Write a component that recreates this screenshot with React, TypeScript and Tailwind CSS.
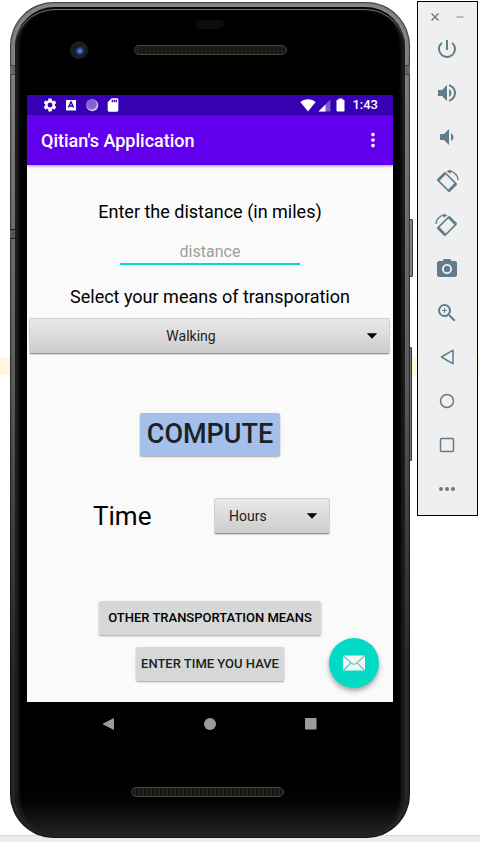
import type { ReactNode } from 'react';
import {
  MdCameraAlt,
  MdMoreVert,
  MdPowerSettingsNew,
  MdSdCard,
  MdSettings,
  MdVolumeDown,
  MdVolumeUp,
  MdZoomIn,
} from 'react-icons/md';

function RotateIcon({ mirrored = false }: { mirrored?: boolean }) {
  return (
    <svg viewBox="0 0 24 24" className="size-6" fill="currentColor" aria-hidden="true">
      <g transform={mirrored ? 'translate(24 0) scale(-1 1)' : undefined}>
        <path
          transform="translate(12 13) rotate(45)"
          fillRule="evenodd"
          d="M-7.500-6h15a1.500 1.500 0 0 1 1.500 1.500v9a1.500 1.500 0 0 1-1.500 1.500h-15a1.500 1.500 0 0 1-1.500-1.500v-9a1.500 1.500 0 0 1 1.500-1.500zM-6.200-4.300v8.600h12.400v-8.600z"
        />
        <path d="M13 2.200C18.500 1.800 22.800 5.500 23 11" fill="none" stroke="currentColor" strokeWidth="1.300" />
        <path d="M11.500 2.200l4.500-1.400-.6 4z" />
      </g>
    </svg>
  );
}

function ToolButton({ label, children }: { label: string; children: ReactNode }) {
  return (
    <button type="button" aria-label={label} className="flex h-11 w-full items-center justify-center pr-0.5">
      {children}
    </button>
  );
}

function EmulatorToolbar() {
  return (
    <aside className="mt-px w-[61px] shrink-0 border border-black bg-[#efefef] pb-1 text-[#607d8b]">
      <div className="flex h-[25px] items-center justify-between px-3 pt-1">
        <button type="button" aria-label="Close">
          <svg viewBox="0 0 10 10" className="size-2.5" stroke="currentColor" strokeWidth="1.4" aria-hidden="true">
            <path d="M1.500 1.500l7 7M8.500 1.500l-7 7" />
          </svg>
        </button>
        <button type="button" aria-label="Minimize">
          <svg viewBox="0 0 10 10" className="size-2.5" stroke="#9fb1ba" strokeWidth="1.6" aria-hidden="true">
            <path d="M1.500 5h7" />
          </svg>
        </button>
      </div>
      <ToolButton label="Power"><MdPowerSettingsNew className="size-6" /></ToolButton>
      <ToolButton label="Volume up"><MdVolumeUp className="size-6" /></ToolButton>
      <ToolButton label="Volume down"><MdVolumeDown className="size-6" /></ToolButton>
      <ToolButton label="Rotate left"><RotateIcon /></ToolButton>
      <ToolButton label="Rotate right"><RotateIcon mirrored /></ToolButton>
      <ToolButton label="Take screenshot"><MdCameraAlt className="size-6" /></ToolButton>
      <ToolButton label="Zoom"><MdZoomIn className="size-6" /></ToolButton>
      <ToolButton label="Back">
        <svg viewBox="0 0 24 24" className="size-6" fill="none" stroke="currentColor" strokeWidth="1.5" strokeLinejoin="round" aria-hidden="true">
          <path d="M18 5.200v13.600L6.500 12z" />
        </svg>
      </ToolButton>
      <ToolButton label="Home">
        <svg viewBox="0 0 24 24" className="size-6" fill="none" stroke="currentColor" strokeWidth="1.5" aria-hidden="true">
          <circle cx="12" cy="12" r="6.500" />
        </svg>
      </ToolButton>
      <ToolButton label="Overview">
        <svg viewBox="0 0 24 24" className="size-6" fill="none" stroke="currentColor" strokeWidth="1.5" aria-hidden="true">
          <rect x="5.500" y="5.500" width="13" height="13" rx="1" />
        </svg>
      </ToolButton>
      <ToolButton label="More">
        <svg viewBox="0 0 24 24" className="size-6" fill="currentColor" aria-hidden="true">
          <circle cx="6" cy="12" r="2" />
          <circle cx="12" cy="12" r="2" />
          <circle cx="18" cy="12" r="2" />
        </svg>
      </ToolButton>
    </aside>
  );
}

function Speaker() {
  return (
    <div className="h-2.5 w-[153px] rounded-full border border-[#45433e] bg-[repeating-linear-gradient(90deg,#171512_0px,#171512_2px,#24211c_2px,#24211c_4px)]" />
  );
}

function StatusBar() {
  return (
    <div className="flex h-5 items-center justify-between bg-[#3700b3] pr-[15px] pl-[15px] text-white">
      <div className="flex items-center gap-[5px]">
        <MdSettings className="size-4" />
        <svg viewBox="0 0 16 16" className="size-4" aria-hidden="true">
          <path fill="#fff" d="M3 3h10v10.500H3z" />
          <path fill="none" stroke="#3700b3" strokeWidth="1.4" d="M5.400 10.500L8 5l2.600 5.500M6.200 9h3.600" />
        </svg>
        <svg viewBox="0 0 16 16" className="size-4" aria-hidden="true">
          <circle cx="8.300" cy="8.300" r="6" fill="#cdbfec" />
          <circle cx="7.500" cy="7.300" r="5.300" fill="#8463cf" />
        </svg>
        <MdSdCard className="size-4" />
      </div>
      <div className="flex items-center">
        <svg viewBox="0 0 16 14" className="h-3.5 w-4" fill="currentColor" aria-hidden="true">
          <path d="M8 13.500L.3 4C2.300 2.300 5 1.200 8 1.200s5.700 1.100 7.700 2.800z" />
        </svg>
        <svg viewBox="0 0 16 14" className="h-3.5 w-4" fill="currentColor" aria-hidden="true">
          <path opacity=".35" d="M14.500 1.500v12h-12z" />
          <path d="M9.500 6.500v7h-7z" />
        </svg>
        <svg viewBox="0 0 16 14" className="h-3.5 w-4" fill="currentColor" aria-hidden="true">
          <path d="M6.500.5h4v1.300h1.200a.8.8 0 0 1 .8.800v10.200a.8.8 0 0 1-.8.800H5.300a.8.8 0 0 1-.8-.8V2.600a.8.8 0 0 1 .8-.8h1.200z" />
        </svg>
        <span className="ml-1 text-[13px] leading-5 font-medium">1:43</span>
      </div>
    </div>
  );
}

function DropArrow() {
  return (
    <svg viewBox="0 0 12 6" className="pointer-events-none absolute top-1/2 right-3 h-1.5 w-3 -translate-y-1/2" aria-hidden="true">
      <path d="M.8.3h10.400L6 5.800z" />
    </svg>
  );
}

const selectStyle =
  'h-9 w-full appearance-none rounded-[2px] border border-[#d0d0d0] border-b-[#999] bg-linear-to-b from-[#e9e9e9] to-[#cdcdcd] text-[14px] text-[#222] shadow-[0_1px_1px_rgba(0,0,0,0.15)]';

const flatButton =
  'h-[34px] rounded-[2px] bg-[#d6d7d7] text-[13px] font-medium shadow-[0_1px_2px_rgba(0,0,0,0.35)]';

function AppScreen() {
  return (
    <div className="bg-[#fafafa]">
      <StatusBar />
      <header className="relative flex h-[50px] items-center justify-between bg-[#6200ee] pr-[9px] pl-3.5 text-white shadow-[0_1px_3px_rgba(0,0,0,0.4)]">
        <h1 className="text-[18px] font-medium">Qitian's Application</h1>
        <button type="button" aria-label="More options">
          <MdMoreVert className="size-[22px]" />
        </button>
      </header>
      <main className="relative flex flex-col items-center pb-[21px] text-black">
        <label htmlFor="distance" className="mt-[35px] text-[18px] leading-6">Enter the distance (in miles)</label>
        <input
          id="distance"
          type="text"
          placeholder="distance"
          className="mt-[17px] h-6 w-[180px] border-b-2 border-[#03dac5] bg-transparent pb-0.5 text-center text-[16px] leading-5 outline-none placeholder:text-[#a0a0a0]"
        />
        <label htmlFor="means" className="mt-5 text-[18px] leading-6">Select your means of transporation</label>
        <div className="mt-[9px] w-full pr-[3px] pl-0.5">
          <div className="relative">
            <select id="means" className={`${selectStyle} pr-[37px] [text-align-last:center]`}>
              <option>Walking</option>
            </select>
            <DropArrow />
          </div>
        </div>
        <button type="button" className="mt-[59px] h-[43px] rounded-[2px] bg-[#a4c0ea] px-[7px] text-[27px] font-medium text-[#1c2126] shadow-[0_1px_2px_rgba(0,0,0,0.35)]">
          COMPUTE
        </button>
        <div className="mt-[42px] flex w-full items-center justify-between pr-[63px] pl-[66px]">
          <label htmlFor="unit" className="text-[26px] leading-9">Time</label>
          <div className="relative w-[116px]">
            <select id="unit" className={`${selectStyle} pl-3.5`}>
              <option>Hours</option>
            </select>
            <DropArrow />
          </div>
        </div>
        <button type="button" className={`${flatButton} mt-[67px] px-[9px]`}>OTHER TRANSPORTATION MEANS</button>
        <button type="button" className={`${flatButton} mt-3 px-[5px] text-[#222]`}>ENTER TIME YOU HAVE</button>
        <button
          type="button"
          aria-label="Send mail"
          className="absolute right-3.5 bottom-3.5 flex size-[50px] items-center justify-center rounded-full bg-[#03dac5] shadow-[0_3px_5px_rgba(0,0,0,0.35)]"
        >
          <svg viewBox="0 0 24 24" className="size-6" aria-hidden="true">
            <rect x="1" y="4.500" width="22" height="15" rx="1.200" fill="#f4f4f4" />
            <path d="M1.500 5l8.300 7.300c1.400 1.200 3 1.200 4.400 0L22.500 5M1.800 19l7-7.200M22.200 19l-7-7.200" fill="none" stroke="#4fc9bb" strokeWidth="1.100" />
          </svg>
        </button>
      </main>
    </div>
  );
}

function NavigationBar() {
  return (
    <nav className="flex h-[43px] items-center justify-center gap-[77px] text-[#9b9b9b]">
      <button type="button" aria-label="Back">
        <svg viewBox="0 0 24 24" className="size-6" fill="currentColor" aria-hidden="true">
          <path d="M17 6v12L6 12.500v-1z" />
        </svg>
      </button>
      <button type="button" aria-label="Home">
        <svg viewBox="0 0 24 24" className="size-6" fill="currentColor" aria-hidden="true">
          <circle cx="12" cy="12" r="6" />
        </svg>
      </button>
      <button type="button" aria-label="Recent apps">
        <svg viewBox="0 0 24 24" className="size-6" fill="currentColor" aria-hidden="true">
          <rect x="6" y="6" width="11.500" height="11.500" rx=".5" />
        </svg>
      </button>
    </nav>
  );
}

function Phone() {
  return (
    <div className="relative mt-0.5 min-w-0 flex-1">
      <div className="absolute top-[217px] -right-[3px] h-[58px] w-2 rounded-[1px] border border-[#333] bg-[#858585]" />
      <div className="absolute top-[345px] -right-0.5 h-[114px] w-2 rounded-[1px] border border-[#333] bg-[#777]" />
      <div className="relative rounded-[44px] bg-linear-to-b from-[#858888] via-[#5a5c5d] via-45% to-[#262727] to-80% px-[5px] pt-[5px] pb-[3px] shadow-[inset_0_0_0_1px_rgba(0,0,0,0.35),inset_0_0_3px_rgba(0,0,0,0.6)]">
        <div className="absolute top-[63px] left-0 h-2.5 w-full border-y border-[#444] bg-[#666]" />
        <div className="absolute top-[227px] left-0 h-2.5 w-1.5 border-y border-[#222] bg-[#555]" />
        <div className="relative rounded-[40px] bg-linear-to-b from-black from-93% to-[#242424] px-3 shadow-[inset_0_3px_1px_-1px_#000,inset_0_4px_1px_-1px_#7d8787,inset_5px_0_3px_-1px_#1c1c1c,inset_-5px_0_3px_-1px_#1c1c1c]">
          <div className="flex h-[88px] flex-col items-center pt-[13px]">
            <div className="h-[9px] w-7 rounded-full bg-[#0b0b10]" />
            <div className="mt-3 grid w-full grid-cols-[1fr_153px_1fr] items-center">
              <div className="pl-[43px]">
                <div className="flex size-[18px] items-center justify-center rounded-full bg-[#1d1c1f]">
                  <div className="size-2.5 rounded-full bg-[radial-gradient(circle_at_60%_60%,#7292e8_0%,#26346f_40%,#0a0b18_75%)]" />
                </div>
              </div>
              <Speaker />
            </div>
          </div>
          <AppScreen />
          <NavigationBar />
          <div className="flex h-[90px] justify-center pt-[42px] pr-[5px]">
            <Speaker />
          </div>
        </div>
      </div>
    </div>
  );
}

export default function App() {
  return (
    <div className="relative isolate flex min-h-screen items-start gap-[7px] bg-white pr-0.5 pl-2.5 font-[Roboto,sans-serif]">
      <div className="absolute inset-x-0 top-[357px] -z-10 h-[18px] bg-[#fff8dc]" />
      <div className="absolute inset-x-0 bottom-0 -z-10 h-[7px] border-t border-[#d8d8d8] bg-[#ececec]" />
      <Phone />
      <EmulatorToolbar />
    </div>
  );
}
